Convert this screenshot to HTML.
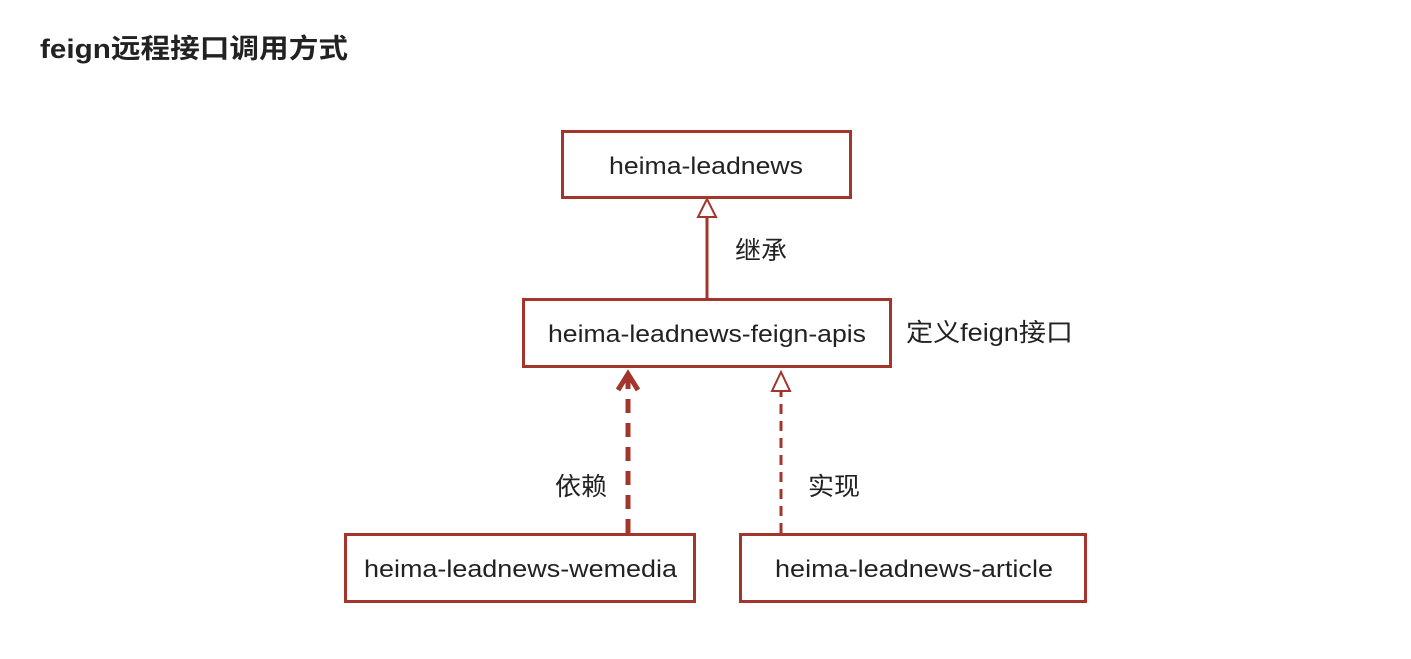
<!DOCTYPE html>
<html><head><meta charset="utf-8"><style>
html,body{margin:0;padding:0;background:#fff;width:1411px;height:659px;overflow:hidden}
svg text{font-family:"Liberation Sans","Noto Sans CJK SC",sans-serif;fill:#222}
</style></head><body>
<svg width="1411" height="659" xmlns="http://www.w3.org/2000/svg">
<text x="40" y="58" font-size="27" font-weight="bold" fill="#111" textLength="308" lengthAdjust="spacingAndGlyphs">feign远程接口调用方式</text>
<g fill="#fff" stroke="#a3352a" stroke-width="3">
<rect x="562.5" y="131.5" width="288" height="66"/>
<rect x="523.5" y="299.5" width="367" height="67"/>
<rect x="345.5" y="534.5" width="349" height="67"/>
<rect x="740.5" y="534.5" width="345" height="67"/>
</g>
<g font-size="24">
<text x="609" y="174" textLength="194" lengthAdjust="spacingAndGlyphs">heima-leadnews</text>
<text x="548" y="342" textLength="318" lengthAdjust="spacingAndGlyphs">heima-leadnews-feign-apis</text>
<text x="364" y="577" textLength="313" lengthAdjust="spacingAndGlyphs">heima-leadnews-wemedia</text>
<text x="775" y="577" textLength="278" lengthAdjust="spacingAndGlyphs">heima-leadnews-article</text>
</g>
<g font-size="25">
<text x="735" y="259" textLength="52" lengthAdjust="spacingAndGlyphs">继承</text>
<text x="906" y="341" textLength="167" lengthAdjust="spacingAndGlyphs">定义feign接口</text>
<text x="555" y="495" textLength="52" lengthAdjust="spacingAndGlyphs">依赖</text>
<text x="808" y="495" textLength="52" lengthAdjust="spacingAndGlyphs">实现</text>
</g>
<line x1="707" y1="217" x2="707" y2="298" stroke="#a3352a" stroke-width="3"/>
<polygon points="707,199 698,217 716,217" fill="#fff" stroke="#a3352a" stroke-width="2"/>
<line x1="628" y1="533" x2="628" y2="378" stroke="#a3352a" stroke-width="5" stroke-dasharray="14,10"/>
<polyline points="618,390 628,374 638,390" fill="none" stroke="#a3352a" stroke-width="5"/>
<line x1="781" y1="533" x2="781" y2="391" stroke="#a3352a" stroke-width="3" stroke-dasharray="10,7"/>
<polygon points="781,372 772,391 790,391" fill="#fff" stroke="#a3352a" stroke-width="2"/>
</svg>
</body></html>
